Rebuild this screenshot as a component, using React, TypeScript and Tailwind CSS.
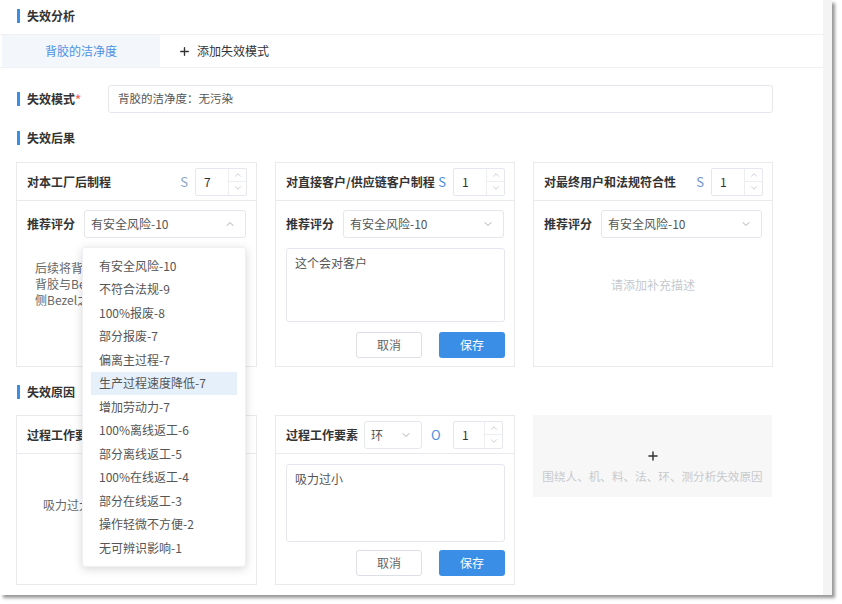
import { ChevronDown, ChevronUp, Plus } from "lucide-react";

const options = [
  "有安全风险-10",
  "不符合法规-9",
  "100%报废-8",
  "部分报废-7",
  "偏离主过程-7",
  "生产过程速度降低-7",
  "增加劳动力-7",
  "100%离线返工-6",
  "部分离线返工-5",
  "100%在线返工-4",
  "部分在线返工-3",
  "操作轻微不方便-2",
  "无可辨识影响-1",
];

const Heading = ({ children }: { children: React.ReactNode }) => (
  <div className="flex items-center h-[26px] pl-[17px]">
    <span className="w-[3px] h-[14px] bg-[#3a8ee6]" />
    <span className="ml-[7px] text-[12px] font-bold text-[#333]">{children}</span>
  </div>
);

const Stepper = ({ value, w = "w-[52px]" }: { value: string; w?: string }) => (
  <div className={`flex ${w} h-[28px] border border-[#e4e7ed] rounded-[2px] bg-white`}>
    <span className="flex-1 flex items-center pl-[8px] text-[12px] text-[#333]">{value}</span>
    <div className="w-[18px] flex flex-col border-l border-[#eceef2]">
      <span className="flex-1 flex items-center justify-center border-b border-[#eceef2]">
        <ChevronUp size={10} className="text-[#c0c4cc]" />
      </span>
      <span className="flex-1 flex items-center justify-center">
        <ChevronDown size={10} className="text-[#c0c4cc]" />
      </span>
    </div>
  </div>
);

const Select = ({ value, open, className = "" }: { value: string; open?: boolean; className?: string }) => (
  <div
    className={`h-[28px] border border-[#e4e7ed] rounded-[3px] bg-white flex items-center pl-[6px] pr-[9px] text-[12px] text-[#555] ${className}`}
  >
    <span className="flex-1 whitespace-nowrap">{value}</span>
    {open ? (
      <ChevronUp size={12} className="text-[#a8adb6]" />
    ) : (
      <ChevronDown size={12} className="text-[#a8adb6]" />
    )}
  </div>
);

const Buttons = () => (
  <div className="flex justify-end gap-[17px] pr-[9px]">
    <button className="w-[66px] h-[26px] border border-[#dcdfe6] rounded-[3px] bg-white text-[12px] text-[#666]">
      取消
    </button>
    <button className="w-[66px] h-[26px] rounded-[3px] bg-[#3a8ee6] text-[12px] text-white">保存</button>
  </div>
);

const CardHeader = ({ title, letter, letterColor, value }: { title: string; letter: string; letterColor: string; value: string }) => (
  <div className="h-[38px] border-b border-[#e8eaee] flex items-center pl-[10px] pr-[9px]">
    <span className="flex-1 whitespace-nowrap text-[12px] font-bold text-[#333]">{title}</span>
    <span className={`mr-[7px] text-[13px] ${letterColor}`}>{letter}</span>
    <Stepper value={value} />
  </div>
);

const ScoreRow = ({ open, children }: { open?: boolean; children?: React.ReactNode }) => (
  <div className="flex items-center mt-[9px] pl-[10px] pr-[10px]">
    <span className="w-[48px] whitespace-nowrap text-[12px] font-bold text-[#333]">推荐评分</span>
    <div className="relative ml-[9px] flex-1">
      <Select value="有安全风险-10" open={open} />
      {children}
    </div>
  </div>
);

const Dropdown = () => (
  <div className="absolute z-20 left-[-2px] top-[37px] w-[164px] h-[320px] bg-white rounded-[3px] shadow-[0_2px_10px_rgba(0,0,0,0.16)] border border-[#eef0f3] pt-[6px] px-[8px]">
    {options.map((o, i) => (
      <div
        key={o}
        className={`h-[23.5px] flex items-center pl-[8px] text-[12px] text-[#555] whitespace-nowrap ${
          i === 5 ? "bg-[#e6f0fb]" : ""
        }`}
      >
        {o}
      </div>
    ))}
  </div>
);

export default function App() {
  return (
    <div className="w-[842px] h-[604px] bg-white font-['Noto_Sans_CJK_SC','Noto_Sans',sans-serif]">
      <div className="w-[832px] h-[595px] flex bg-white shadow-[3px_3px_3px_rgba(0,0,0,0.4)]">
        <div className="flex-1">
          {/* 失效分析 */}
          <div className="h-[32px] flex items-center">
            <div className="flex items-center pl-[17px]">
              <span className="w-[3px] h-[14px] bg-[#3a8ee6]" />
              <span className="ml-[7px] text-[12px] font-bold text-[#333]">失效分析</span>
            </div>
          </div>

          {/* Tabs */}
          <div className="mt-[2px] h-[34px] flex border-y border-[#f0f1f3]">
            <div className="ml-[2px] w-[158px] flex items-center justify-center bg-[#f3f7fc] text-[12px] text-[#4a90e2]">
              背胶的洁净度
            </div>
            <div className="ml-[18px] flex items-center text-[12px] text-[#333]">
              <Plus size={13} strokeWidth={2.5} className="text-[#333]" />
              <span className="ml-[6px]">添加失效模式</span>
            </div>
          </div>

          {/* 失效模式 */}
          <div className="mt-[17px] flex items-center pl-[17px]">
            <span className="w-[3px] h-[14px] bg-[#3a8ee6]" />
            <span className="ml-[7px] w-[81px] text-[12px] font-bold text-[#333]">
              失效模式<span className="text-[#f56c6c]">*</span>
            </span>
            <div className="w-[665px] h-[28px] border border-[#e4e7ed] rounded-[3px] flex items-center pl-[9px] text-[11.5px] text-[#555]">
              背胶的洁净度：无污染
            </div>
          </div>

          {/* 失效后果 */}
          <div className="mt-[12px]">
            <Heading>失效后果</Heading>
          </div>

          <div className="mt-[11px] flex gap-[18px] pl-[16px]">
            <div className="w-[241px] h-[205px] border border-[#e8eaee] bg-white">
              <CardHeader title="对本工厂后制程" letter="S" letterColor="text-[#8aa3c8]" value="7" />
              <ScoreRow open>
                <Dropdown />
              </ScoreRow>
              <div className="mt-[22px] pl-[18px] text-[12px] leading-[16px] text-[#666]">
                后续将背胶撕下后清洁
                <br />
                背胶与Bezel贴合面，
                <br />
                侧Bezel之间无污染
              </div>
            </div>

            <div className="w-[240px] h-[205px] border border-[#e8eaee] bg-white">
              <CardHeader title="对直接客户/供应链客户制程" letter="S" letterColor="text-[#4a8fe0]" value="1" />
              <ScoreRow />
              <div className="mt-[10px] ml-[10px] mr-[9px] h-[74px] border border-[#e4e7ed] rounded-[3px] px-[8px] py-[5px] text-[12px] text-[#555]">
                这个会对客户
              </div>
              <div className="mt-[10px]">
                <Buttons />
              </div>
            </div>

            <div className="w-[240px] h-[205px] border border-[#e8eaee] bg-white">
              <CardHeader title="对最终用户和法规符合性" letter="S" letterColor="text-[#6c93d0]" value="1" />
              <ScoreRow />
              <div className="mt-[39px] text-center text-[12px] leading-[16px] text-[#c6c9ce]">请添加补充描述</div>
            </div>
          </div>

          {/* 失效原因 */}
          <div className="mt-[12px]">
            <Heading>失效原因</Heading>
          </div>

          <div className="mt-[10px] flex gap-[18px] pl-[16px] items-start">
            <div className="w-[241px] h-[170px] border border-[#e8eaee] bg-white">
              <div className="h-[38px] border-b border-[#e8eaee] flex items-center pl-[10px] pr-[11px]">
                <span className="whitespace-nowrap text-[12px] font-bold text-[#333]">过程工作要素</span>
              </div>
              <div className="mt-[43px] pl-[26px] text-[12px] leading-[16px] text-[#666]">吸力过大</div>
            </div>

            <div className="w-[240px] h-[170px] border border-[#e8eaee] bg-white">
              <div className="h-[38px] border-b border-[#e8eaee] flex items-center pl-[10px] pr-[11px]">
                <span className="whitespace-nowrap text-[12px] font-bold text-[#333]">过程工作要素</span>
                <Select value="环" className="ml-[6px] w-[58px]" />
                <span className="ml-[9px] text-[13px] text-[#4a8fe0]">O</span>
                <div className="ml-auto">
                  <Stepper value="1" w="w-[50px]" />
                </div>
              </div>
              <div className="mt-[10px] ml-[10px] mr-[9px] h-[78px] border border-[#e4e7ed] rounded-[3px] px-[8px] py-[5px] text-[12px] text-[#555]">
                吸力过小
              </div>
              <div className="mt-[8px]">
                <Buttons />
              </div>
            </div>

            <div className="w-[239px] h-[82px] bg-[#f7f7f7] flex flex-col items-center pt-[34px]">
              <Plus size={14} strokeWidth={2.5} className="text-[#333]" />
              <span className="mt-[5px] whitespace-nowrap text-[11.6px] text-[#c8cacd]">
                围绕人、机、料、法、环、测分析失效原因
              </span>
            </div>
          </div>
        </div>
        <div className="w-[9px] bg-[#f4f4f4]" />
      </div>
    </div>
  );
}
